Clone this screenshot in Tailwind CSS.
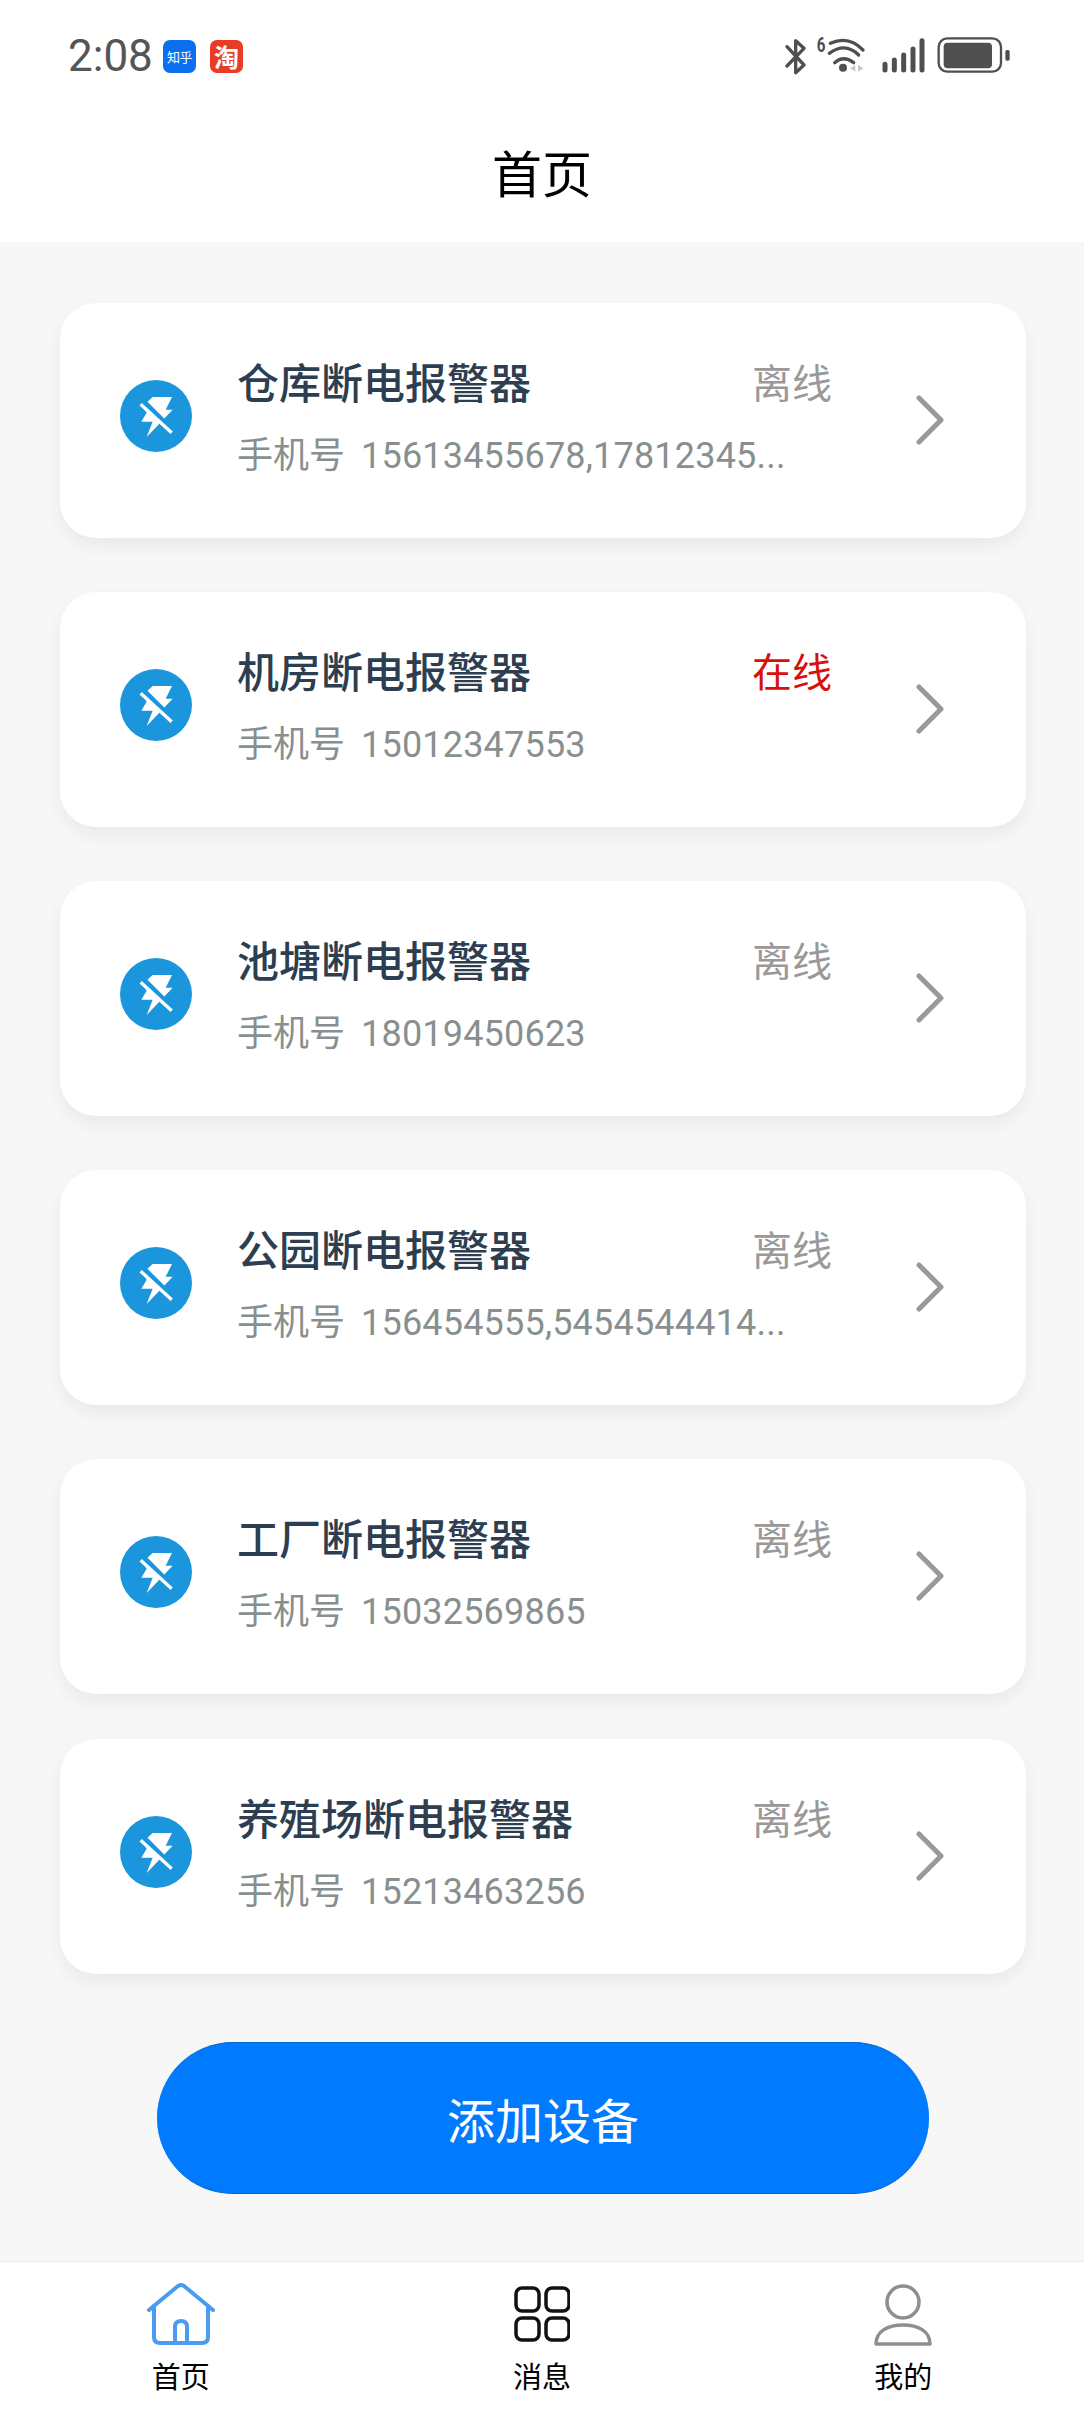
<!DOCTYPE html>
<html lang="zh">
<head>
<meta charset="utf-8">
<script src="https://cdn.jsdelivr.net/npm/@tailwindcss/browser@4"></script>
</head>
<body class="m-0">
<div class="w-[1084px] h-[2412px] flex flex-col bg-[#f7f7f8] overflow-hidden font-['Noto_Sans_CJK_SC','Noto_Sans',sans-serif]">
  <!-- header -->
  <header class="h-[242px] bg-white flex flex-col shrink-0">
    <div class="h-[80px] mt-[16px] flex items-center justify-between pl-[68px] pr-[71px]">
      <div class="flex items-center">
        <span class="font-['Roboto',sans-serif] text-[44px] leading-none text-[#555] w-[95px]">2:08</span>
        <span class="w-[33px] h-[33px] rounded-[7px] bg-[#0a6ff0] text-white text-[13px] leading-[33px] text-center tracking-[-0.5px] whitespace-nowrap">知乎</span>
        <span class="ml-[14px] w-[33px] h-[33px] rounded-[7px] bg-[#e83c24] text-white text-[25px] font-bold leading-[33px] text-center">淘</span>
      </div>
      <svg class="w-[228px] h-[60px]" viewBox="129 78 684 180" fill="none">
        <path d="M135 140L186 195L161 218V122L186 145L135 198" stroke="#4f4f4f" stroke-width="10" stroke-linecap="round" stroke-linejoin="round"/>
        <text x="224" y="157" font-family="Roboto" font-size="58" font-weight="700" fill="#4f4f4f" textLength="26" lengthAdjust="spacingAndGlyphs">6</text>
        <path d="M265 130Q320 105 363 150M262 160Q310 125 350 165M278 188Q305 165 335 188" stroke="#4f4f4f" stroke-width="10" stroke-linecap="round"/>
        <circle cx="303" cy="203" r="12" fill="#4f4f4f"/>
        <path d="M324 205L340 195V215ZM348 195L365 205L348 215Z" fill="#c8c8c8"/>
        <path d="M429 193V210M457 180V210M485 165V210M513 147V210M540 122V210" stroke="#4f4f4f" stroke-width="15" stroke-linecap="round"/>
        <rect x="590" y="115" width="187" height="100" rx="26" stroke="#4f4f4f" stroke-width="7"/>
        <rect x="605" y="128" width="145" height="77" rx="12" fill="#4f4f4f"/>
        <rect x="790" y="150" width="13" height="32" rx="5" fill="#4f4f4f"/>
      </svg>
    </div>
    <div class="flex-1 flex items-center justify-center pt-[4px]">
      <h1 class="text-[50px] leading-none font-normal text-black">首页</h1>
    </div>
  </header>

  <!-- list -->
  <main class="flex-1 pl-[60px] pr-[58px] pt-[61px] flex flex-col">
    <a class="h-[235px] mb-[54px] bg-white rounded-[36px] shadow-[0_8px_18px_rgba(0,0,0,0.06)] flex items-center pl-[60px] pr-[82px]">
      <svg class="w-[72px] h-[72px] shrink-0 -mt-[10px]" viewBox="60 57 216 216"><circle cx="168" cy="165" r="108" fill="#1b96dc"/><path d="M158 108H216L197 146H218L140 228L158 182H124L140 155L128 135Z" fill="#fff"/><path d="M128 122L218 212" stroke="#1b96dc" stroke-width="20"/><path d="M122 130L215 215" stroke="#fff" stroke-width="10"/></svg>
      <div class="ml-[45px] flex-1 min-w-0 -mt-[10px]">
        <div class="flex justify-between items-center w-[595px]"><span class="text-[42px] leading-[60px] font-medium text-[#2c3e50]">仓库断电报警器</span><span class="text-[40px] leading-[60px] text-[#999]">离线</span></div>
        <p class="mt-[20px] flex whitespace-nowrap text-[36px] leading-[50px] text-[#888f8f]"><span class="-mt-[4px]">手机号</span><span class="ml-[16px] tracking-[0.2px] font-['Roboto',sans-serif]">15613455678,17812345...</span></p>
      </div>
      <svg class="w-[28px] h-[50px] shrink-0 -mt-[1px]" viewBox="0 0 28 50" fill="none"><path d="M3 3L25 25L3 47" stroke="#999" stroke-width="5" stroke-linecap="round" stroke-linejoin="round"/></svg>
    </a>
    <a class="h-[235px] mb-[54px] bg-white rounded-[36px] shadow-[0_8px_18px_rgba(0,0,0,0.06)] flex items-center pl-[60px] pr-[82px]">
      <svg class="w-[72px] h-[72px] shrink-0 -mt-[10px]" viewBox="60 57 216 216"><circle cx="168" cy="165" r="108" fill="#1b96dc"/><path d="M158 108H216L197 146H218L140 228L158 182H124L140 155L128 135Z" fill="#fff"/><path d="M128 122L218 212" stroke="#1b96dc" stroke-width="20"/><path d="M122 130L215 215" stroke="#fff" stroke-width="10"/></svg>
      <div class="ml-[45px] flex-1 min-w-0 -mt-[10px]">
        <div class="flex justify-between items-center w-[595px]"><span class="text-[42px] leading-[60px] font-medium text-[#2c3e50]">机房断电报警器</span><span class="text-[40px] leading-[60px] text-[#d9100a]">在线</span></div>
        <p class="mt-[20px] flex whitespace-nowrap text-[36px] leading-[50px] text-[#888f8f]"><span class="-mt-[4px]">手机号</span><span class="ml-[16px] tracking-[0.2px] font-['Roboto',sans-serif]">15012347553</span></p>
      </div>
      <svg class="w-[28px] h-[50px] shrink-0 -mt-[1px]" viewBox="0 0 28 50" fill="none"><path d="M3 3L25 25L3 47" stroke="#999" stroke-width="5" stroke-linecap="round" stroke-linejoin="round"/></svg>
    </a>
    <a class="h-[235px] mb-[54px] bg-white rounded-[36px] shadow-[0_8px_18px_rgba(0,0,0,0.06)] flex items-center pl-[60px] pr-[82px]">
      <svg class="w-[72px] h-[72px] shrink-0 -mt-[10px]" viewBox="60 57 216 216"><circle cx="168" cy="165" r="108" fill="#1b96dc"/><path d="M158 108H216L197 146H218L140 228L158 182H124L140 155L128 135Z" fill="#fff"/><path d="M128 122L218 212" stroke="#1b96dc" stroke-width="20"/><path d="M122 130L215 215" stroke="#fff" stroke-width="10"/></svg>
      <div class="ml-[45px] flex-1 min-w-0 -mt-[10px]">
        <div class="flex justify-between items-center w-[595px]"><span class="text-[42px] leading-[60px] font-medium text-[#2c3e50]">池塘断电报警器</span><span class="text-[40px] leading-[60px] text-[#999]">离线</span></div>
        <p class="mt-[20px] flex whitespace-nowrap text-[36px] leading-[50px] text-[#888f8f]"><span class="-mt-[4px]">手机号</span><span class="ml-[16px] tracking-[0.2px] font-['Roboto',sans-serif]">18019450623</span></p>
      </div>
      <svg class="w-[28px] h-[50px] shrink-0 -mt-[1px]" viewBox="0 0 28 50" fill="none"><path d="M3 3L25 25L3 47" stroke="#999" stroke-width="5" stroke-linecap="round" stroke-linejoin="round"/></svg>
    </a>
    <a class="h-[235px] mb-[54px] bg-white rounded-[36px] shadow-[0_8px_18px_rgba(0,0,0,0.06)] flex items-center pl-[60px] pr-[82px]">
      <svg class="w-[72px] h-[72px] shrink-0 -mt-[10px]" viewBox="60 57 216 216"><circle cx="168" cy="165" r="108" fill="#1b96dc"/><path d="M158 108H216L197 146H218L140 228L158 182H124L140 155L128 135Z" fill="#fff"/><path d="M128 122L218 212" stroke="#1b96dc" stroke-width="20"/><path d="M122 130L215 215" stroke="#fff" stroke-width="10"/></svg>
      <div class="ml-[45px] flex-1 min-w-0 -mt-[10px]">
        <div class="flex justify-between items-center w-[595px]"><span class="text-[42px] leading-[60px] font-medium text-[#2c3e50]">公园断电报警器</span><span class="text-[40px] leading-[60px] text-[#999]">离线</span></div>
        <p class="mt-[20px] flex whitespace-nowrap text-[36px] leading-[50px] text-[#888f8f]"><span class="-mt-[4px]">手机号</span><span class="ml-[16px] tracking-[0.2px] font-['Roboto',sans-serif]">156454555,5454544414...</span></p>
      </div>
      <svg class="w-[28px] h-[50px] shrink-0 -mt-[1px]" viewBox="0 0 28 50" fill="none"><path d="M3 3L25 25L3 47" stroke="#999" stroke-width="5" stroke-linecap="round" stroke-linejoin="round"/></svg>
    </a>
    <a class="h-[235px] mb-[45px] bg-white rounded-[36px] shadow-[0_8px_18px_rgba(0,0,0,0.06)] flex items-center pl-[60px] pr-[82px]">
      <svg class="w-[72px] h-[72px] shrink-0 -mt-[10px]" viewBox="60 57 216 216"><circle cx="168" cy="165" r="108" fill="#1b96dc"/><path d="M158 108H216L197 146H218L140 228L158 182H124L140 155L128 135Z" fill="#fff"/><path d="M128 122L218 212" stroke="#1b96dc" stroke-width="20"/><path d="M122 130L215 215" stroke="#fff" stroke-width="10"/></svg>
      <div class="ml-[45px] flex-1 min-w-0 -mt-[10px]">
        <div class="flex justify-between items-center w-[595px]"><span class="text-[42px] leading-[60px] font-medium text-[#2c3e50]">工厂断电报警器</span><span class="text-[40px] leading-[60px] text-[#999]">离线</span></div>
        <p class="mt-[20px] flex whitespace-nowrap text-[36px] leading-[50px] text-[#888f8f]"><span class="-mt-[4px]">手机号</span><span class="ml-[16px] tracking-[0.2px] font-['Roboto',sans-serif]">15032569865</span></p>
      </div>
      <svg class="w-[28px] h-[50px] shrink-0 -mt-[1px]" viewBox="0 0 28 50" fill="none"><path d="M3 3L25 25L3 47" stroke="#999" stroke-width="5" stroke-linecap="round" stroke-linejoin="round"/></svg>
    </a>
    <a class="h-[235px] bg-white rounded-[36px] shadow-[0_8px_18px_rgba(0,0,0,0.06)] flex items-center pl-[60px] pr-[82px]">
      <svg class="w-[72px] h-[72px] shrink-0 -mt-[10px]" viewBox="60 57 216 216"><circle cx="168" cy="165" r="108" fill="#1b96dc"/><path d="M158 108H216L197 146H218L140 228L158 182H124L140 155L128 135Z" fill="#fff"/><path d="M128 122L218 212" stroke="#1b96dc" stroke-width="20"/><path d="M122 130L215 215" stroke="#fff" stroke-width="10"/></svg>
      <div class="ml-[45px] flex-1 min-w-0 -mt-[10px]">
        <div class="flex justify-between items-center w-[595px]"><span class="text-[42px] leading-[60px] font-medium text-[#2c3e50]">养殖场断电报警器</span><span class="text-[40px] leading-[60px] text-[#999]">离线</span></div>
        <p class="mt-[20px] flex whitespace-nowrap text-[36px] leading-[50px] text-[#888f8f]"><span class="-mt-[4px]">手机号</span><span class="ml-[16px] tracking-[0.2px] font-['Roboto',sans-serif]">15213463256</span></p>
      </div>
      <svg class="w-[28px] h-[50px] shrink-0 -mt-[1px]" viewBox="0 0 28 50" fill="none"><path d="M3 3L25 25L3 47" stroke="#999" stroke-width="5" stroke-linecap="round" stroke-linejoin="round"/></svg>
    </a>
    <button class="mt-[68px] ml-[97px] mr-[97px] h-[152px] rounded-[76px] bg-[#007aff] border-y border-[#0068cc] text-white text-[48px] leading-none flex items-center justify-center">添加设备</button>
  </main>

  <!-- tab bar -->
  <nav class="h-[151px] bg-white border-t border-[#ececec] grid grid-cols-3 shrink-0">
    <div class="flex flex-col items-center pt-[21px]">
      <svg class="w-[68px] h-[62px]" viewBox="0 0 68 62" fill="none" stroke="#4a9cf0" stroke-width="4" stroke-linecap="round" stroke-linejoin="round"><path d="M2 27L31 3Q34 1 37 3L66 27"/><path d="M7 23V54Q7 60 13 60H55Q61 60 61 54V23"/><path d="M28 60V44Q28 38 34 38Q40 38 40 44V60"/></svg>
      <span class="mt-[12px] text-[29px] leading-[36px] text-black">首页</span>
    </div>
    <div class="flex flex-col items-center pt-[24px]">
      <svg class="w-[56px] h-[56px]" viewBox="0 0 56 56" fill="none" stroke="#111" stroke-width="3.5"><rect x="2" y="2" width="23" height="23" rx="6"/><rect x="32" y="2" width="23" height="23" rx="6"/><rect x="2" y="32" width="23" height="22" rx="6"/><rect x="32" y="32" width="23" height="22" rx="6"/></svg>
      <span class="mt-[15px] text-[29px] leading-[36px] text-black">消息</span>
    </div>
    <div class="flex flex-col items-center pt-[22px]">
      <svg class="w-[58px] h-[62px]" viewBox="0 0 58 62" fill="none" stroke="#8f8f8f" stroke-width="3.5"><circle cx="29" cy="18" r="16"/><path d="M2 60C2 47 14 41 29 41C44 41 56 47 56 60Z" stroke-linejoin="round"/></svg>
      <span class="mt-[11px] text-[29px] leading-[36px] text-black">我的</span>
    </div>
  </nav>
</div>
</body>
</html>
